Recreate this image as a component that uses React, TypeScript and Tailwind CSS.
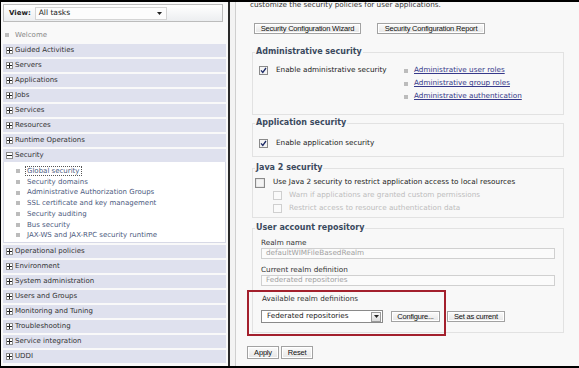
import React from "react";

const navTop = [
  "Guided Activities",
  "Servers",
  "Applications",
  "Jobs",
  "Services",
  "Resources",
  "Runtime Operations",
];

const securityItems = [
  "Global security",
  "Security domains",
  "Administrative Authorization Groups",
  "SSL certificate and key management",
  "Security auditing",
  "Bus security",
  "JAX-WS and JAX-RPC security runtime",
];

const navBottom = [
  "Operational policies",
  "Environment",
  "System administration",
  "Users and Groups",
  "Monitoring and Tuning",
  "Troubleshooting",
  "Service integration",
  "UDDI",
];

function Toggle({ open }: { open?: boolean }) {
  return (
    <span className="flex h-[7px] w-[7px] shrink-0 items-center justify-center border border-[#8c8c8c] bg-white">
      <svg width="5" height="5" viewBox="0 0 5 5">
        <rect x="0" y="2" width="5" height="1" fill="#222" />
        {!open && <rect x="2" y="0" width="1" height="5" fill="#222" />}
      </svg>
    </span>
  );
}

function NavRow({ label, open }: { label: string; open?: boolean }) {
  return (
    <div className="flex h-[13px] items-center gap-[2px] bg-[#dfe1ee] pl-[3px] text-[#333]">
      <Toggle open={open} />
      <span>{label}</span>
    </div>
  );
}

function Bullet() {
  return <span className="h-[4px] w-[4px] shrink-0 bg-[#bcbcbc]" />;
}

function CheckBox({ checked, disabled, size = 9 }: { checked?: boolean; disabled?: boolean; size?: number }) {
  return (
    <svg width={size} height={size} viewBox="0 0 9 9" className="shrink-0">
      <rect x="0.5" y="0.5" width="8" height="8" fill={disabled ? "#fafafa" : "#f4f4f4"} stroke={disabled ? "#cfcfcf" : "#8a8a8a"} />
      {checked && <path d="M2 4.3 L3.8 6.4 L7 2" fill="none" stroke="#1c2a66" strokeWidth="1.3" />}
    </svg>
  );
}

function Btn({ children, w }: { children: React.ReactNode; w: string }) {
  return (
    <div
      className={`${w} flex h-[11px] items-center justify-center border border-[#a2a2a2] bg-gradient-to-b from-[#fbfbfb] to-[#e6e6e6] font-['Liberation_Sans',Arial,sans-serif] text-[7.5px] tracking-[-0.2px] text-[#111] shadow-[inset_0_0_0_1px_#ffffff]`}
    >
      {children}
    </div>
  );
}

function Legend({ children }: { children: React.ReactNode }) {
  return (
    <legend className="px-[1px] text-[8px] font-bold leading-[10px] text-[#3b4a5e]">{children}</legend>
  );
}

export default function App() {
  return (
    <div className="flex h-[368px] w-[579px] overflow-hidden bg-black pb-[2px] pl-[1px] pt-[2px] font-['DejaVu_Sans',Verdana,sans-serif]">
      {/* Navigation */}
      <div className="flex w-[229px] shrink-0 flex-col border-r-2 border-[#2a2a2a] bg-[#f9f9f9] px-[2px] pt-[2px] text-[7px]">
        <div className="flex h-[18px] w-[220px] items-center border border-[#bcbcbc] bg-gradient-to-b from-white to-[#eceef0] pl-[5px]">
          <span className="text-[7px] font-bold text-[#222]">View:</span>
          <div className="ml-[4px] flex h-[13px] w-[132px] items-center justify-between border border-[#d4d4d4] bg-[#fcfcfc] pl-[3px] pr-[4px] text-[7.5px] text-[#222]">
            <span>All tasks</span>
            <svg width="5" height="3" viewBox="0 0 5 3">
              <path d="M0 0h5L2.5 3z" fill="#222" />
            </svg>
          </div>
        </div>

        <div className="mt-[8px] flex h-[10px] items-center gap-[6px] pl-[2px] text-[#888]">
          <Bullet />
          <span>Welcome</span>
        </div>

        <div className="mt-[4px] flex flex-col gap-[2px]">
          {navTop.map((n) => (
            <NavRow key={n} label={n} />
          ))}
          <div>
            <NavRow label="Security" open />
            <div className="h-[81px] border border-t-0 border-[#d7d9e6] bg-white pt-[4px]">
              {securityItems.map((s, i) => (
                <div key={s} className="flex h-[10.7px] items-center gap-[5px] pl-[12px] text-[#4c5a7e]">
                  <Bullet />
                  <span className={i === 0 ? "border border-dotted border-[#555] px-[1px] leading-[8px]" : "px-[2px]"}>{s}</span>
                </div>
              ))}
            </div>
          </div>
          {navBottom.map((n) => (
            <NavRow key={n} label={n} />
          ))}
        </div>
      </div>

      {/* divider strip */}
      <div className="w-[6px] shrink-0 border-r border-[#cfcfcf] bg-[#f3f3f3]" />

      {/* Content */}
      <div className="relative flex flex-1 flex-col overflow-hidden bg-[#f8f8f8] pl-[11px] text-[7.25px] text-[#222]">
        <div className="-mt-[2px] ml-[3px] h-[10px] leading-[10px] text-[#333]">
          customize the security policies for user applications.
        </div>

        <div className="ml-[7px] mt-[13px] flex gap-[16px]">
          <Btn w="w-[107px]">Security Configuration Wizard</Btn>
          <Btn w="w-[108px]">Security Configuration Report</Btn>
        </div>

        {/* Administrative security */}
        <fieldset className="ml-[5px] mt-[13px] h-[68px] w-[312px] border border-[#e2e2e2] pl-[2px]">
          <Legend>Administrative security</Legend>
          <div className="flex pt-[7px]">
            <div className="flex h-[13px] w-[149px] items-center gap-[8px] pl-[4px]">
              <CheckBox checked />
              <span>Enable administrative security</span>
            </div>
            <div className="flex flex-col">
              {["Administrative user roles", "Administrative group roles", "Administrative authentication"].map((l) => (
                <div key={l} className="flex h-[13px] items-center gap-[6px]">
                  <Bullet />
                  <span className="text-[#36398a] underline">{l}</span>
                </div>
              ))}
            </div>
          </div>
        </fieldset>

        {/* Application security */}
        <fieldset className="ml-[5px] mt-[3px] h-[39px] w-[312px] border border-[#e2e2e2] pl-[2px]">
          <Legend>Application security</Legend>
          <div className="mt-[9px] flex h-[13px] items-center gap-[8px] pl-[4px]">
            <CheckBox checked />
            <span>Enable application security</span>
          </div>
        </fieldset>

        {/* Java 2 security */}
        <fieldset className="ml-[5px] mt-[6px] h-[55px] w-[312px] border border-[#e2e2e2] pl-[2px]">
          <Legend>Java 2 security</Legend>
          <div className="mt-[3px] flex h-[13px] items-center gap-[8px]">
            <CheckBox size={10} />
            <span>Use Java 2 security to restrict application access to local resources</span>
          </div>
          {["Warn if applications are granted custom permissions", "Restrict access to resource authentication data"].map((t) => (
            <div key={t} className="flex h-[13px] items-center gap-[7px] pl-[18px] text-[#bdbdbd]">
              <CheckBox disabled />
              <span>{t}</span>
            </div>
          ))}
        </fieldset>

        {/* User account repository */}
        <fieldset className="ml-[5px] mt-[5px] h-[110px] w-[312px] border border-[#e2e2e2] pl-[2px]">
          <Legend>User account repository</Legend>
          <div className="ml-[6px] mt-[5px] h-[10px] leading-[10px] text-[#333]">Realm name</div>
          <div className="ml-[6px] flex h-[11px] w-[294px] items-center border border-[#d0d0d0] bg-[#fbfbfb] pl-[4px] text-[#a0a0a0]">
            defaultWIMFileBasedRealm
          </div>
          <div className="ml-[6px] mt-[6px] h-[10px] leading-[10px] text-[#333]">Current realm definition</div>
          <div className="ml-[6px] flex h-[11px] w-[294px] items-center border border-[#d0d0d0] bg-[#fbfbfb] pl-[4px] text-[#a0a0a0]">
            Federated repositories
          </div>
          <div className="ml-[7px] mt-[8px] h-[10px] leading-[10px] text-[#333]">Available realm definitions</div>
          <div className="ml-[6px] mt-[6px] flex items-center">
            <div className="flex h-[13px] w-[122px] items-center justify-between border border-[#8a8a8a] bg-white pl-[5px] pr-[1px]">
              <span>Federated repositories</span>
              <div className="flex h-[10px] w-[10px] items-center justify-center border border-[#9a9a9a] bg-gradient-to-b from-[#f8f8f8] to-[#dcdcdc]">
                <svg width="5" height="3" viewBox="0 0 5 3">
                  <path d="M0 0h5L2.5 3z" fill="#222" />
                </svg>
              </div>
            </div>
            <div className="ml-[8px]">
              <Btn w="w-[49px]">Configure...</Btn>
            </div>
            <div className="ml-[7px]">
              <Btn w="w-[58px]">Set as current</Btn>
            </div>
          </div>
        </fieldset>

        <div className="mt-[13px] flex gap-[2px]">
          <Btn w="w-[32px] h-[13px]">Apply</Btn>
          <Btn w="w-[32px] h-[13px]">Reset</Btn>
        </div>

        {/* highlight annotation */}
        <div className="absolute left-[11px] top-[288px] h-[46px] w-[199px] border-2 border-[#a3202d]" />
      </div>
    </div>
  );
}
